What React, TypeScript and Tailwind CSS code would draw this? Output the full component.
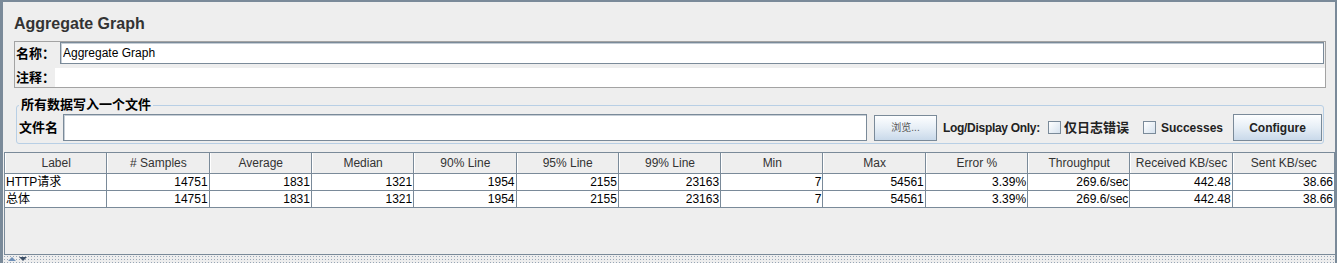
import React from "react";

const columns = [
  "Label",
  "# Samples",
  "Average",
  "Median",
  "90% Line",
  "95% Line",
  "99% Line",
  "Min",
  "Max",
  "Error %",
  "Throughput",
  "Received KB/sec",
  "Sent KB/sec",
];

const stats = ["14751", "1831", "1321", "1954", "2155", "23163", "7", "54561", "3.39%", "269.6/sec", "442.48", "38.66"];

const rows = [
  ["HTTP请求", ...stats],
  ["总体", ...stats],
];

function Checkbox() {
  return <span className="inline-block w-[13px] h-[13px] border border-[#7a8a99] bg-linear-to-br from-[#ffffff] to-[#d6e2ee]" />;
}

function MetalButton({ children, className }: { children: React.ReactNode; className?: string }) {
  return (
    <button
      className={
        "flex items-center justify-center border border-[#7a8a99] bg-linear-to-b from-[#fdfeff] via-[#e6eef6] to-[#c9d9ea] " +
        (className ?? "")
      }
    >
      {children}
    </button>
  );
}

export default function App() {
  return (
    <div className="w-[1337px] h-[263px] overflow-hidden bg-[#eeeeee] border-t-2 border-l-[3px] border-r-2 border-[#7a8a99] flex flex-col font-['Liberation_Sans','Noto_Sans_CJK_SC',sans-serif] text-[12px] text-black">
      {/* title */}
      <div className="h-[39px] shrink-0 pt-[12px] pl-[11px]">
        <h1 className="text-[16px] leading-[19px] font-bold text-[#333333]">Aggregate Graph</h1>
      </div>

      {/* name / comment */}
      <div className="ml-[11px] w-[1312px] h-[47px] shrink-0 border border-[#a3a3a3] flex flex-col">
        <div className="h-[22px] flex items-center">
          <span className="pl-[1px] w-[45px] text-[13px] font-bold leading-none">名称：</span>
          <input
            readOnly
            value="Aggregate Graph"
            className="w-[1264px] h-[22px] px-[2px] border border-[#7a8a99] shadow-[inset_1px_1px_0_#c6ced6] bg-white text-[12px] outline-none font-['Liberation_Sans',sans-serif]"
          />
        </div>
        <div className="mt-[4px] h-[19px] flex items-center">
          <span className="pl-[1px] w-[40px] text-[13px] font-bold leading-none">注释：</span>
          <div className="w-[1270px] h-[19px] bg-white" />
        </div>
      </div>

      {/* write to file */}
      <fieldset className="ml-[13px] mt-[9px] w-[1308px] shrink-0 border border-[#b8cfe5] rounded-[3px] pb-[2px]">
        <legend className="ml-[2px] px-[2px] text-[13px] font-bold leading-[16px]">所有数据写入一个文件</legend>
        <div className="flex items-center h-[27px] mt-[1px] pl-[2px] pr-[1px]">
          <span className="w-[44px] text-[13px] font-bold leading-none">文件名</span>
          <input
            readOnly
            className="w-[804px] h-[27px] border border-[#7a8a99] shadow-[inset_1px_1px_0_#c6ced6] bg-white outline-none"
          />
          <MetalButton className="ml-[7px] w-[63px] h-[26px] text-[10px] text-[#555555]">浏览...</MetalButton>
          <span className="ml-[6px] font-bold text-[12px] text-[#222222] tracking-[-0.3px]">Log/Display Only:</span>
          <span className="ml-[8px] flex items-center">
            <Checkbox />
          </span>
          <span className="ml-[3px] text-[13px] font-bold text-[#222222]">仅日志错误</span>
          <span className="ml-[14px] flex items-center">
            <Checkbox />
          </span>
          <span className="ml-[5px] font-bold text-[12px] text-[#222222]">Successes</span>
          <MetalButton className="ml-auto w-[89px] h-[27px] font-bold text-[12px] text-[#222222]">Configure</MetalButton>
        </div>
      </fieldset>

      {/* table */}
      <div className="mt-[8px] ml-[1px] h-[103px] shrink-0 border-l border-t border-b border-[#7a8a99] flex flex-col">
        <div className="grid grid-cols-[repeat(13,minmax(0,1fr))] h-[21px] border-b border-[#7a8a99] bg-[#eeeeee]">
          {columns.map((c) => (
            <div
              key={c}
              className="flex items-center justify-center border-r border-[#7a8a99] border-l border-l-white text-[#333333] text-[12px]"
            >
              {c}
            </div>
          ))}
        </div>
        {rows.map((r) => (
          <div key={r[0]} className="grid grid-cols-[repeat(13,minmax(0,1fr))] h-[17px] bg-white border-b border-[#7a8a99]">
            {r.map((v, i) => (
              <div
                key={i}
                className={
                  "flex items-center border-r border-[#7a8a99] px-[1px] text-[12px] leading-none " +
                  (i === 0 ? "justify-start" : "justify-end")
                }
              >
                {v}
              </div>
            ))}
          </div>
        ))}
        <div className="flex-1 bg-[#eeeeee]" />
      </div>

      {/* splitter */}
      <div className="flex-1 flex items-center pl-[5px] bg-[radial-gradient(circle,#98a6b6_0.8px,transparent_0.9px)] bg-[length:3px_3px]">
        <svg width="20" height="6" viewBox="0 0 20 6">
          <path d="M0 5 L4 1 L8 5 Z" fill="#6f90b8" />
          <path d="M11 1 L19 1 L15 5 Z" fill="#3d4f66" />
        </svg>
      </div>
    </div>
  );
}
